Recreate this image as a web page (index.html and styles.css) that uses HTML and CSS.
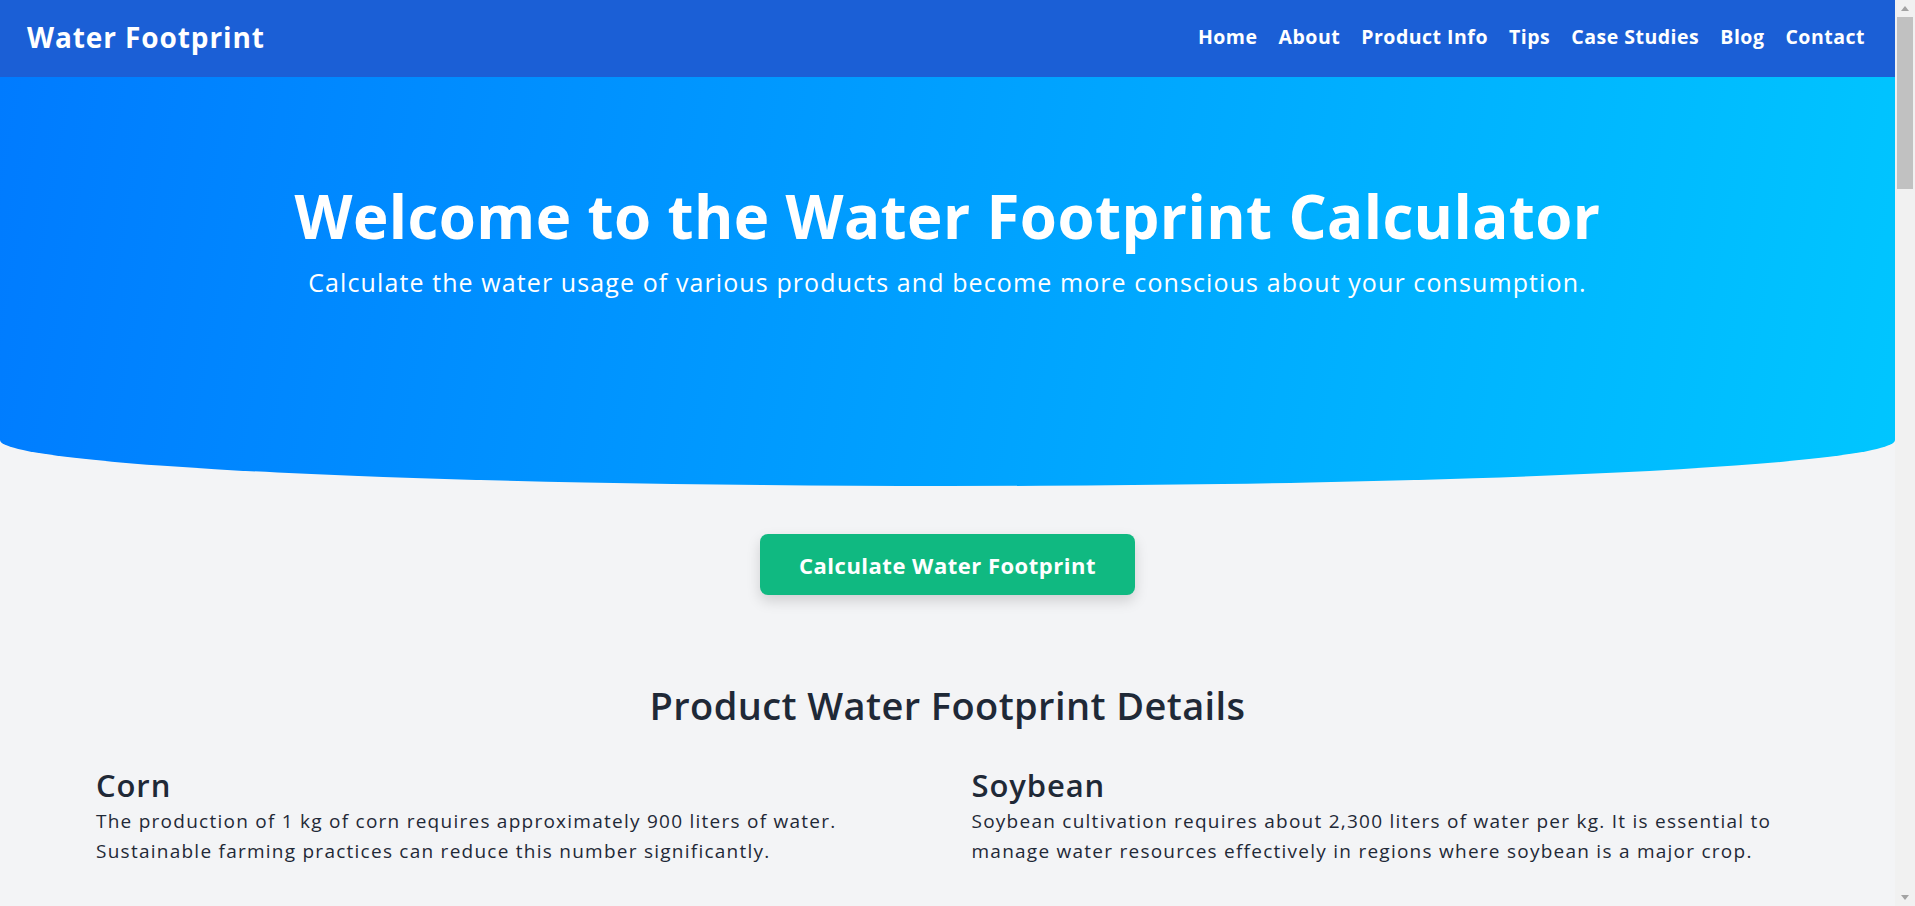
FILE: index.html
```html
<!DOCTYPE html>
<html lang="en">
<head>
<meta charset="utf-8">
<title>Water Footprint Calculator</title>
<link rel="stylesheet" href="styles.css">
</head>
<body>
<header class="site-header">
  <a class="logo" href="#">Water Footprint</a>
  <nav class="nav">
    <a href="#">Home</a>
    <a href="#">About</a>
    <a href="#">Product Info</a>
    <a href="#">Tips</a>
    <a href="#">Case Studies</a>
    <a href="#">Blog</a>
    <a href="#">Contact</a>
  </nav>
</header>

<section class="hero">
  <h1 class="hero-title">Welcome to the Water Footprint Calculator</h1>
  <p class="hero-sub">Calculate the water usage of various products and become more conscious about your consumption.</p>
</section>

<div class="cta">
  <button class="cta-btn" type="button">Calculate Water Footprint</button>
</div>

<section class="details">
  <h2 class="section-title">Product Water Footprint Details</h2>
  <div class="product-grid">
    <article class="product">
      <h3>Corn</h3>
      <p>The production of 1 kg of corn requires approximately 900 liters of water. Sustainable farming practices can reduce this number significantly.</p>
    </article>
    <article class="product">
      <h3>Soybean</h3>
      <p>Soybean cultivation requires about 2,300 liters of water per kg. It is essential to manage water resources effectively in regions where soybean is a major crop.</p>
    </article>
    <article class="product">
      <h3>Rice</h3>
      <p>Producing 1 kg of rice takes around 2,500 liters of water. Alternate wetting and drying techniques can save a large share of irrigation water.</p>
    </article>
    <article class="product">
      <h3>Wheat</h3>
      <p>Wheat needs roughly 1,800 liters of water per kg. Efficient irrigation and drought-resistant varieties help lower its footprint.</p>
    </article>
    <article class="product">
      <h3>Beef</h3>
      <p>Beef has one of the highest water footprints, at about 15,400 liters per kg, mostly from the feed consumed by cattle.</p>
    </article>
    <article class="product">
      <h3>Chicken</h3>
      <p>Chicken meat requires around 4,300 liters of water per kg, considerably less than beef or pork.</p>
    </article>
    <article class="product">
      <h3>Cotton</h3>
      <p>A single cotton T-shirt can take 2,700 liters of water to produce, from growing the fibre to dyeing the fabric.</p>
    </article>
    <article class="product">
      <h3>Coffee</h3>
      <p>One cup of coffee carries a hidden water footprint of about 130 liters, most of it used to grow the beans.</p>
    </article>
  </div>
</section>

<section class="block">
  <h2 class="section-title">Tips to Reduce Your Water Footprint</h2>
  <div class="product-grid">
    <article class="product">
      <h3>Eat Seasonal Produce</h3>
      <p>Locally grown, seasonal fruit and vegetables usually need less irrigation and storage.</p>
    </article>
    <article class="product">
      <h3>Cut Food Waste</h3>
      <p>Every item of food thrown away wastes all of the water that went into producing it.</p>
    </article>
    <article class="product">
      <h3>Buy Fewer Clothes</h3>
      <p>Textiles are water intensive; wearing clothes longer saves thousands of liters.</p>
    </article>
    <article class="product">
      <h3>Choose Plant Proteins</h3>
      <p>Beans, lentils and grains have a much smaller footprint than most meats.</p>
    </article>
  </div>
</section>

<section class="block">
  <h2 class="section-title">Case Studies</h2>
  <div class="product-grid">
    <article class="product">
      <h3>Drip Irrigation in India</h3>
      <p>Farmers switching to drip irrigation reduced their water use by up to 50% while raising yields.</p>
    </article>
    <article class="product">
      <h3>Water Recycling in Textiles</h3>
      <p>Closed-loop dyeing facilities reuse most of their process water instead of discharging it.</p>
    </article>
  </div>
</section>

<section class="block">
  <h2 class="section-title">Latest from the Blog</h2>
  <div class="product-grid">
    <article class="product">
      <h3>What Is Virtual Water?</h3>
      <p>An introduction to the hidden water embedded in the goods we trade and consume every day.</p>
    </article>
    <article class="product">
      <h3>Green, Blue and Grey Water</h3>
      <p>Understanding the three components that make up a product's total water footprint.</p>
    </article>
    <article class="product">
      <h3>Water Stress Around the World</h3>
      <p>Which regions face the greatest pressure on their freshwater resources, and why.</p>
    </article>
    <article class="product">
      <h3>Smarter Shopping</h3>
      <p>Simple choices at the supermarket that add up to big water savings over a year.</p>
    </article>
  </div>
</section>

<section class="block">
  <h2 class="section-title">Contact Us</h2>
  <div class="product-grid">
    <article class="product">
      <h3>Email</h3>
      <p>info@waterfootprint.example</p>
    </article>
    <article class="product">
      <h3>Address</h3>
      <p>12 River Lane, Springfield</p>
    </article>
  </div>
</section>

<footer class="site-footer">
  <p>&copy; 2024 Water Footprint. All rights reserved.</p>
</footer>

<div class="scrollbar" aria-hidden="true">
  <span class="sb-btn sb-up"></span>
  <span class="sb-thumb"></span>
  <span class="sb-btn sb-down"></span>
</div>
</body>
</html>
```

FILE: styles.css
```css
* {
  box-sizing: border-box;
}

html {
  background: #f3f4f6;
}

body {
  margin: 0 20px 0 0;
  background: #f3f4f6;
  color: #1f2937;
  font-family: "Open Sans", "DejaVu Sans", sans-serif;
}

/* classic browser scrollbar, as shown in the reference */
.scrollbar {
  position: fixed;
  top: 0;
  right: 0;
  width: 20px;
  height: 100vh;
  background: #f1f1f1;
  display: flex;
  flex-direction: column;
}

.sb-btn {
  height: 17px;
  display: flex;
  align-items: center;
  justify-content: center;
}

.sb-up::before,
.sb-down::before {
  content: "";
  width: 0;
  height: 0;
  border-left: 4.5px solid transparent;
  border-right: 4.5px solid transparent;
}

.sb-up::before {
  border-bottom: 5px solid #a3a3a3;
}

.sb-down {
  margin-top: auto;
}

.sb-down::before {
  border-top: 5px solid #a3a3a3;
}

.sb-thumb {
  height: 172px;
  margin: 0 2px;
  background: #c1c1c1;
}

.site-header {
  height: 77px;
  background: #1b5fd6;
  display: flex;
  align-items: center;
  justify-content: space-between;
  padding: 0 30px 4px 27px;
}

.logo {
  color: #fff;
  text-decoration: none;
  font-weight: 700;
  font-size: 28px;
  letter-spacing: 0.9px;
}

.nav {
  display: flex;
  gap: 21px;
}

.nav a {
  color: #fff;
  text-decoration: none;
  font-weight: 700;
  font-size: 19.5px;
  letter-spacing: 0.5px;
}

.hero {
  background: linear-gradient(100deg, #007bff 0%, #00c6ff 100%);
  text-align: center;
  color: #fff;
  padding: 103px 20px 188px;
  border-bottom-left-radius: 50% 46px;
  border-bottom-right-radius: 50% 46px;
}

.hero-title {
  margin: 0;
  font-size: 60px;
  line-height: 72px;
  font-weight: 700;
  letter-spacing: 0.4px;
}

.hero-sub {
  margin: 14px 0 0;
  font-size: 25px;
  line-height: 32px;
  font-weight: 400;
  letter-spacing: 1.1px;
}

.cta {
  display: flex;
  justify-content: center;
  padding-top: 48px;
}

.cta-btn {
  height: 61px;
  padding: 0 39px;
  border: 0;
  border-radius: 8px;
  background: #10b981;
  color: #fff;
  font-family: inherit;
  font-size: 22px;
  font-weight: 700;
  letter-spacing: 0.5px;
  box-shadow: 0 6px 14px rgba(0, 0, 0, 0.15);
  cursor: pointer;
}

.details {
  padding: 90px 96px 0;
}

.section-title {
  margin: 0;
  text-align: center;
  font-size: 38px;
  line-height: 40px;
  font-weight: 600;
  letter-spacing: 0.4px;
}

.product-grid {
  display: grid;
  grid-template-columns: 1fr 1fr;
  column-gap: 48px;
  row-gap: 48px;
  margin-top: 42px;
}

.product h3 {
  margin: 0 0 3px;
  font-size: 31px;
  line-height: 36px;
  font-weight: 600;
  letter-spacing: 0.9px;
}

.product p {
  margin: 0;
  font-size: 19px;
  line-height: 30px;
  letter-spacing: 1.25px;
}

.block {
  padding: 140px 96px 0;
}

.site-footer {
  margin-top: 700px;
  background: #1b5fd6;
  color: #fff;
  text-align: center;
  padding: 32px;
}

.site-footer p {
  margin: 0;
}
```
